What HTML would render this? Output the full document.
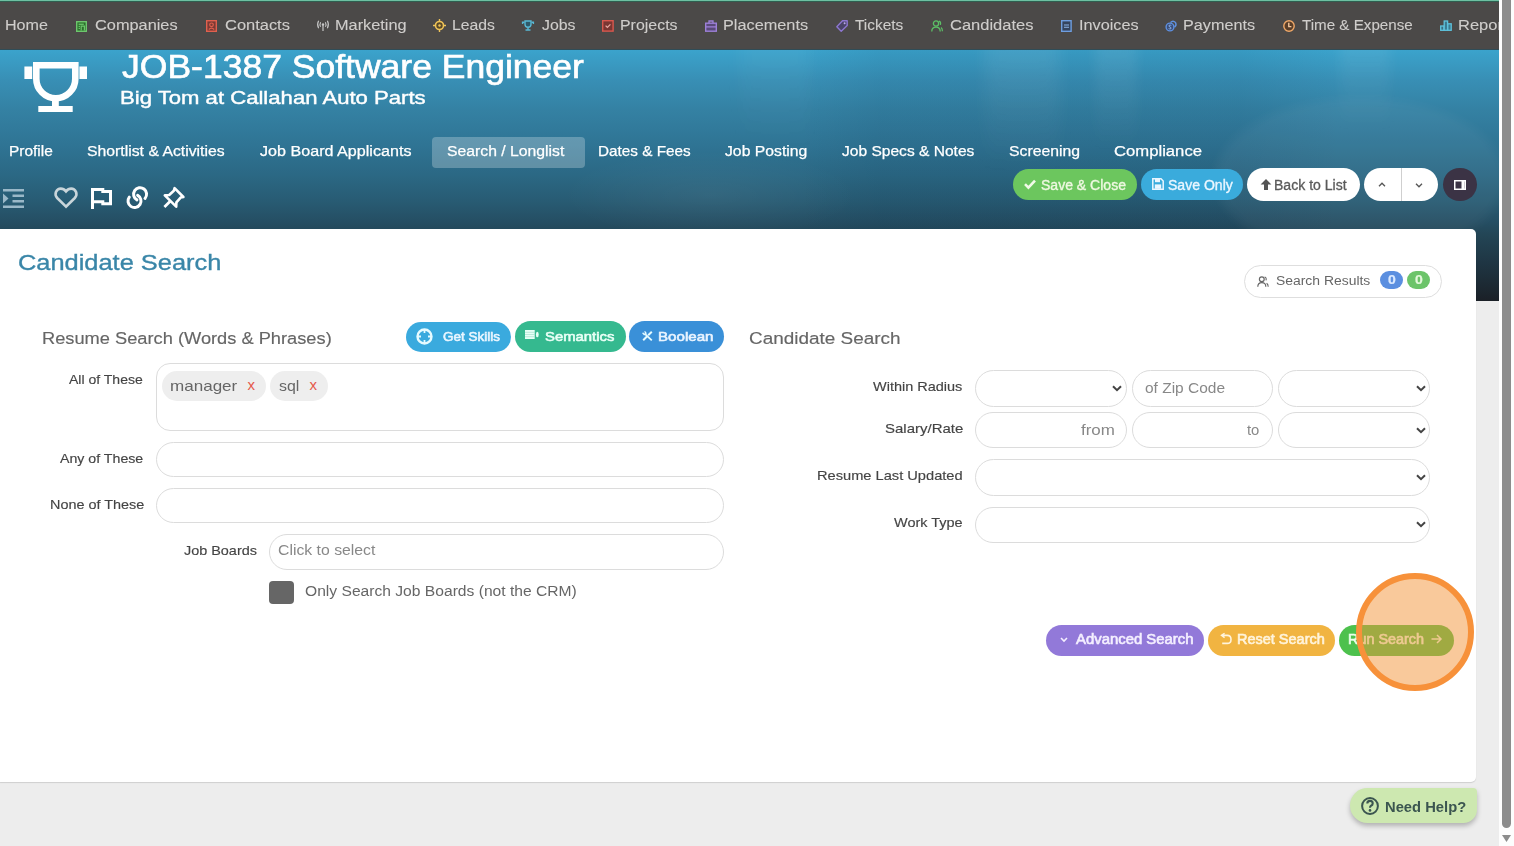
<!DOCTYPE html>
<html><head><meta charset="utf-8">
<style>
html,body{margin:0;padding:0;width:1514px;height:846px;overflow:hidden;background:#ededed;font-family:"Liberation Sans",sans-serif;}
.a{position:absolute;box-sizing:border-box;}
.t{position:absolute;white-space:nowrap;transform-origin:0 0;font-family:"Liberation Sans",sans-serif;}
svg{position:absolute;overflow:visible;}
#nav{left:0;top:0;width:1499px;height:50px;background:#4b4948;overflow:hidden;}
#navtop{left:0;top:0;width:1499px;height:2px;background:linear-gradient(#6dc0a2 0,#6dc0a2 50%,#2f5f50 50%);}
#hdr{left:0;top:50px;width:1499px;height:251px;background:linear-gradient(180deg,#3ba3cc 0px,#388fb5 30px,#3481a3 60px,#2f7494 95px,#2b6884 125px,#285c74 150px,#254e63 172px,#234555 185px,#1f3644 212px,#1c2831 238px,#1b2027 251px);}
#card{left:0;top:229px;width:1476px;height:553px;background:#fff;border-radius:0 5px 5px 0;box-shadow:0 1px 1px rgba(0,0,0,0.13);}
#track{left:1499px;top:0;width:15px;height:846px;background:#fdfdfd;}
#thumb{left:1502px;top:0;width:9px;height:828px;background:#8c8c8c;border-radius:0 0 4.5px 4.5px;}
.inp{position:absolute;box-sizing:border-box;border:1px solid #dcdcdc;background:#fff;}
.pill{border-radius:999px;}
.btn{position:absolute;border-radius:999px;}
</style></head><body>
<div id="nav" class="a"></div>
<div id="navtop" class="a"></div>
<div class="a" style="left:0;top:49px;width:1499px;height:1px;background:#2f4d58;"></div>
<div id="hdr" class="a"></div>
<div class="a" style="left:0;top:50px;width:1499px;height:251px;overflow:hidden;">
 <div class="a" style="left:800px;top:0;width:699px;height:180px;background:linear-gradient(90deg,rgba(0,30,60,0) 0,rgba(0,30,60,0.07) 80px,rgba(0,30,60,0.07) 440px,rgba(0,30,60,0) 540px);"></div>
 <div class="a" style="left:985px;top:-10px;width:75px;height:130px;background:linear-gradient(rgba(255,255,255,0.08),rgba(255,255,255,0));filter:blur(8px);"></div>
 <div class="a" style="left:1095px;top:-10px;width:42px;height:110px;background:linear-gradient(rgba(255,255,255,0.08),rgba(255,255,255,0));filter:blur(6px);"></div>
 <div class="a" style="left:740px;top:-10px;width:70px;height:110px;background:linear-gradient(rgba(255,255,255,0.04),rgba(255,255,255,0));filter:blur(8px);"></div>
 <div class="a" style="left:1340px;top:-10px;width:50px;height:90px;background:linear-gradient(rgba(255,255,255,0.07),rgba(255,255,255,0));filter:blur(6px);"></div>
 <div class="a" style="left:1215px;top:48px;width:290px;height:160px;border-radius:50%;background:rgba(255,255,255,0.045);filter:blur(5px);"></div>
 <div class="a" style="left:560px;top:100px;width:300px;height:90px;border-radius:50%;background:radial-gradient(ellipse at center,rgba(255,255,255,0.05),rgba(255,255,255,0) 70%);"></div>
</div>
<!-- active tab -->
<div class="a" style="left:432px;top:136.5px;width:153px;height:31px;border-radius:4px;background:rgba(255,255,255,0.25);"></div>
<div id="card" class="a"></div>

<!-- header buttons -->
<div class="btn" style="left:1013px;top:169px;width:124px;height:31px;background:#6cc65e;"></div>
<div class="btn" style="left:1141px;top:169px;width:102px;height:31px;background:#3aabdc;"></div>
<div class="btn" style="left:1247px;top:168px;width:113px;height:32.5px;background:#fff;"></div>
<div class="btn" style="left:1364px;top:168px;width:74px;height:32.5px;background:#fff;"></div>
<div class="a" style="left:1400.5px;top:168px;width:1.5px;height:32.5px;background:#cfcfcf;"></div>
<div class="btn" style="left:1443px;top:168px;width:34px;height:33px;background:#3b3345;"></div>

<!-- search results pill -->
<div class="inp pill" style="left:1244px;top:265px;width:198px;height:33px;border-color:#dedede"></div>
<div class="btn" style="left:1380px;top:271px;width:23px;height:18px;background:#5b8fe0;"></div>
<div class="btn" style="left:1407px;top:271px;width:23px;height:18px;background:#6cc46a;"></div>

<!-- resume search buttons -->
<div class="btn" style="left:406px;top:322px;width:105px;height:30px;background:#3aaade;"></div>
<div class="btn" style="left:515px;top:321px;width:111px;height:31px;background:#35b98f;"></div>
<div class="btn" style="left:629px;top:321px;width:95px;height:31px;background:#3a90d8;"></div>

<!-- left inputs -->
<div class="inp" style="left:156px;top:363px;width:568px;height:68px;border-radius:14px;"></div>
<div class="a" style="left:161.5px;top:371px;width:104px;height:30px;border-radius:15px;background:#eeeeee;"></div>
<div class="a" style="left:270px;top:371px;width:57.5px;height:30px;border-radius:15px;background:#eeeeee;"></div>
<div class="inp pill" style="left:156px;top:442px;width:568px;height:35px;"></div>
<div class="inp pill" style="left:156px;top:488px;width:568px;height:35px;"></div>
<div class="inp pill" style="left:269px;top:534px;width:455px;height:35.5px;"></div>
<div class="a" style="left:269px;top:581px;width:25px;height:23px;border-radius:4px;background:#666;"></div>

<!-- right inputs -->
<div class="inp pill" style="left:975px;top:370px;width:152px;height:37px;"></div>
<div class="inp pill" style="left:1132px;top:370px;width:141px;height:37px;"></div>
<div class="inp pill" style="left:1278px;top:370px;width:152px;height:37px;"></div>
<div class="inp pill" style="left:975px;top:412px;width:152px;height:36px;"></div>
<div class="inp pill" style="left:1132px;top:412px;width:141px;height:36px;"></div>
<div class="inp pill" style="left:1278px;top:412px;width:152px;height:36px;"></div>
<div class="inp pill" style="left:975px;top:459px;width:455px;height:37px;"></div>
<div class="inp pill" style="left:975px;top:507px;width:455px;height:36px;"></div>

<!-- bottom buttons -->
<div class="btn" style="left:1046px;top:625px;width:158px;height:31px;background:#9279d9;"></div>
<div class="btn" style="left:1208px;top:625px;width:127px;height:31px;background:#f1b441;"></div>
<div class="btn" style="left:1339px;top:625px;width:115px;height:31px;background:#4dc14d;"></div>

<!-- need help -->
<div class="a" style="left:1350px;top:788px;width:127px;height:35px;background:#cde8b0;border-radius:18px 4px 14px 18px;box-shadow:0 3px 5px rgba(0,0,0,0.25);"></div>

<div class="t" style="left:5.28px;top:17px;font-size:14.39px;line-height:17.27px;transform:scaleX(1.1191);color:#cfcdcb;font-weight:normal;-webkit-text-stroke:0.1px #cfcdcb;">Home</div>
<div class="t" style="left:95.00px;top:17px;font-size:14.39px;line-height:17.27px;transform:scaleX(1.1362);color:#cfcdcb;font-weight:normal;-webkit-text-stroke:0.1px #cfcdcb;">Companies</div>
<div class="t" style="left:224.50px;top:17px;font-size:14.39px;line-height:17.27px;transform:scaleX(1.1443);color:#cfcdcb;font-weight:normal;-webkit-text-stroke:0.1px #cfcdcb;">Contacts</div>
<div class="t" style="left:334.87px;top:17px;font-size:14.39px;line-height:17.27px;transform:scaleX(1.1349);color:#cfcdcb;font-weight:normal;-webkit-text-stroke:0.1px #cfcdcb;">Marketing</div>
<div class="t" style="left:452.20px;top:17px;font-size:14.39px;line-height:17.27px;transform:scaleX(1.0953);color:#cfcdcb;font-weight:normal;-webkit-text-stroke:0.1px #cfcdcb;">Leads</div>
<div class="t" style="left:541.70px;top:17px;font-size:14.39px;line-height:17.27px;transform:scaleX(1.1035);color:#cfcdcb;font-weight:normal;-webkit-text-stroke:0.1px #cfcdcb;">Jobs</div>
<div class="t" style="left:620.09px;top:17px;font-size:14.39px;line-height:17.27px;transform:scaleX(1.1076);color:#cfcdcb;font-weight:normal;-webkit-text-stroke:0.1px #cfcdcb;">Projects</div>
<div class="t" style="left:723.37px;top:17px;font-size:14.39px;line-height:17.27px;transform:scaleX(1.1324);color:#cfcdcb;font-weight:normal;-webkit-text-stroke:0.1px #cfcdcb;">Placements</div>
<div class="t" style="left:855.20px;top:17px;font-size:14.39px;line-height:17.27px;transform:scaleX(1.0736);color:#cfcdcb;font-weight:normal;-webkit-text-stroke:0.1px #cfcdcb;">Tickets</div>
<div class="t" style="left:949.90px;top:17px;font-size:14.39px;line-height:17.27px;transform:scaleX(1.1470);color:#cfcdcb;font-weight:normal;-webkit-text-stroke:0.1px #cfcdcb;">Candidates</div>
<div class="t" style="left:1078.57px;top:17px;font-size:14.39px;line-height:17.27px;transform:scaleX(1.1310);color:#cfcdcb;font-weight:normal;-webkit-text-stroke:0.1px #cfcdcb;">Invoices</div>
<div class="t" style="left:1183.27px;top:17px;font-size:14.39px;line-height:17.27px;transform:scaleX(1.1271);color:#cfcdcb;font-weight:normal;-webkit-text-stroke:0.1px #cfcdcb;">Payments</div>
<div class="t" style="left:1302.00px;top:17px;font-size:14.39px;line-height:17.27px;transform:scaleX(1.0550);color:#cfcdcb;font-weight:normal;-webkit-text-stroke:0.1px #cfcdcb;">Time &amp; Expense</div>
<div class="t" style="left:1458.45px;top:17px;font-size:14.39px;line-height:17.27px;transform:scaleX(1.1476);color:#cfcdcb;font-weight:normal;-webkit-text-stroke:0.1px #cfcdcb;">Reports</div>
<div class="t" style="left:121.50px;top:48px;font-size:32.56px;line-height:39.07px;transform:scaleX(1.0911);color:#ffffff;font-weight:normal;-webkit-text-stroke:0.65px #ffffff;">JOB-1387 Software Engineer</div>
<div class="t" style="left:119.77px;top:88px;font-size:18.02px;line-height:21.62px;transform:scaleX(1.2273);color:#ffffff;font-weight:normal;-webkit-text-stroke:0.4px #ffffff;">Big Tom at Callahan Auto Parts</div>
<div class="t" style="left:8.86px;top:143px;font-size:14.83px;line-height:17.8px;transform:scaleX(1.0421);color:#ffffff;font-weight:normal;-webkit-text-stroke:0.25px #ffffff;">Profile</div>
<div class="t" style="left:87.20px;top:143px;font-size:14.83px;line-height:17.8px;transform:scaleX(1.0641);color:#ffffff;font-weight:normal;-webkit-text-stroke:0.25px #ffffff;">Shortlist &amp; Activities</div>
<div class="t" style="left:260.40px;top:143px;font-size:14.83px;line-height:17.8px;transform:scaleX(1.0872);color:#ffffff;font-weight:normal;-webkit-text-stroke:0.25px #ffffff;">Job Board Applicants</div>
<div class="t" style="left:446.50px;top:143px;font-size:14.83px;line-height:17.8px;transform:scaleX(1.0626);color:#ffffff;font-weight:normal;-webkit-text-stroke:0.25px #ffffff;">Search / Longlist</div>
<div class="t" style="left:598.47px;top:143px;font-size:14.83px;line-height:17.8px;transform:scaleX(1.0315);color:#ffffff;font-weight:normal;-webkit-text-stroke:0.25px #ffffff;">Dates &amp; Fees</div>
<div class="t" style="left:725.40px;top:143px;font-size:14.83px;line-height:17.8px;transform:scaleX(1.0616);color:#ffffff;font-weight:normal;-webkit-text-stroke:0.25px #ffffff;">Job Posting</div>
<div class="t" style="left:841.80px;top:143px;font-size:14.83px;line-height:17.8px;transform:scaleX(1.0494);color:#ffffff;font-weight:normal;-webkit-text-stroke:0.25px #ffffff;">Job Specs &amp; Notes</div>
<div class="t" style="left:1008.50px;top:143px;font-size:14.83px;line-height:17.8px;transform:scaleX(1.0643);color:#ffffff;font-weight:normal;-webkit-text-stroke:0.25px #ffffff;">Screening</div>
<div class="t" style="left:1113.80px;top:143px;font-size:14.83px;line-height:17.8px;transform:scaleX(1.1236);color:#ffffff;font-weight:normal;-webkit-text-stroke:0.25px #ffffff;">Compliance</div>
<div class="t" style="left:1041.00px;top:177px;font-size:13.81px;line-height:16.57px;transform:scaleX(1.0165);color:#eef8e0;font-weight:normal;-webkit-text-stroke:0.35px #eef8e0;">Save &amp; Close</div>
<div class="t" style="left:1167.60px;top:177px;font-size:13.81px;line-height:16.57px;transform:scaleX(1.0180);color:#eaf6ff;font-weight:normal;-webkit-text-stroke:0.35px #eaf6ff;">Save Only</div>
<div class="t" style="left:1274.48px;top:177px;font-size:13.81px;line-height:16.57px;transform:scaleX(1.0187);color:#5a5a5a;font-weight:normal;-webkit-text-stroke:0.3px #5a5a5a;">Back to List</div>
<div class="t" style="left:17.56px;top:250px;font-size:22.24px;line-height:26.69px;transform:scaleX(1.1422);color:#3a86a8;font-weight:normal;-webkit-text-stroke:0.35px #3a86a8;">Candidate Search</div>
<div class="t" style="left:1275.50px;top:273px;font-size:13.23px;line-height:15.88px;transform:scaleX(1.0519);color:#666666;font-weight:normal;">Search Results</div>
<div class="t" style="left:41.98px;top:329px;font-size:16.3px;line-height:19.56px;transform:scaleX(1.1208);color:#666666;font-weight:normal;-webkit-text-stroke:0.15px #666666;">Resume Search (Words &amp; Phrases)</div>
<div class="t" style="left:442.50px;top:329px;font-size:13.4px;line-height:16.08px;transform:scaleX(1.0078);color:#eaf6ff;font-weight:normal;-webkit-text-stroke:0.6px #eaf6ff;">Get Skills</div>
<div class="t" style="left:545.00px;top:329px;font-size:13.4px;line-height:16.08px;transform:scaleX(1.1095);color:#eafff6;font-weight:normal;-webkit-text-stroke:0.6px #eafff6;">Semantics</div>
<div class="t" style="left:657.87px;top:329px;font-size:13.4px;line-height:16.08px;transform:scaleX(1.1280);color:#eaf4ff;font-weight:normal;-webkit-text-stroke:0.6px #eaf4ff;">Boolean</div>
<div class="t" style="left:69.40px;top:372px;font-size:13.1px;line-height:15.72px;transform:scaleX(1.0703);color:#444444;font-weight:normal;-webkit-text-stroke:0.15px #444444;">All of These</div>
<div class="t" style="left:169.70px;top:377px;font-size:15.53px;line-height:18.64px;transform:scaleX(1.0987);color:#666666;font-weight:normal;">manager</div>
<div class="t" style="left:278.80px;top:377px;font-size:15.53px;line-height:18.64px;transform:scaleX(1.0265);color:#666666;font-weight:normal;">sql</div>
<div class="t" style="left:60.30px;top:451px;font-size:13.1px;line-height:15.72px;transform:scaleX(1.0824);color:#444444;font-weight:normal;-webkit-text-stroke:0.15px #444444;">Any of These</div>
<div class="t" style="left:49.50px;top:497px;font-size:13.1px;line-height:15.72px;transform:scaleX(1.0992);color:#444444;font-weight:normal;-webkit-text-stroke:0.15px #444444;">None of These</div>
<div class="t" style="left:183.60px;top:543px;font-size:13.1px;line-height:15.72px;transform:scaleX(1.1006);color:#444444;font-weight:normal;-webkit-text-stroke:0.15px #444444;">Job Boards</div>
<div class="t" style="left:277.50px;top:542px;font-size:14.0px;line-height:16.8px;transform:scaleX(1.1276);color:#888888;font-weight:normal;">Click to select</div>
<div class="t" style="left:304.90px;top:582px;font-size:15.26px;line-height:18.31px;transform:scaleX(1.0245);color:#666666;font-weight:normal;">Only Search Job Boards (not the CRM)</div>
<div class="t" style="left:748.60px;top:329px;font-size:16.3px;line-height:19.56px;transform:scaleX(1.1626);color:#666666;font-weight:normal;-webkit-text-stroke:0.15px #666666;">Candidate Search</div>
<div class="t" style="left:873.10px;top:379px;font-size:13.1px;line-height:15.72px;transform:scaleX(1.1055);color:#444444;font-weight:normal;-webkit-text-stroke:0.15px #444444;">Within Radius</div>
<div class="t" style="left:884.80px;top:421px;font-size:13.1px;line-height:15.72px;transform:scaleX(1.1449);color:#444444;font-weight:normal;-webkit-text-stroke:0.15px #444444;">Salary/Rate</div>
<div class="t" style="left:817.48px;top:468px;font-size:13.1px;line-height:15.72px;transform:scaleX(1.1178);color:#444444;font-weight:normal;-webkit-text-stroke:0.15px #444444;">Resume Last Updated</div>
<div class="t" style="left:894.30px;top:515px;font-size:13.1px;line-height:15.72px;transform:scaleX(1.1039);color:#444444;font-weight:normal;-webkit-text-stroke:0.15px #444444;">Work Type</div>
<div class="t" style="left:1144.50px;top:380px;font-size:14.0px;line-height:16.8px;transform:scaleX(1.1063);color:#888888;font-weight:normal;">of Zip Code</div>
<div class="t" style="left:1081.10px;top:422px;font-size:14.0px;line-height:16.8px;transform:scaleX(1.2108);color:#888888;font-weight:normal;">from</div>
<div class="t" style="left:1247.00px;top:422px;font-size:14.0px;line-height:16.8px;transform:scaleX(1.0597);color:#888888;font-weight:normal;">to</div>
<div class="t" style="left:1076.40px;top:632px;font-size:13.8px;line-height:16.56px;transform:scaleX(1.0791);color:#f4efff;font-weight:normal;-webkit-text-stroke:0.6px #f4efff;">Advanced Search</div>
<div class="t" style="left:1236.55px;top:632px;font-size:13.8px;line-height:16.56px;transform:scaleX(1.0498);color:#fff4dc;font-weight:normal;-webkit-text-stroke:0.6px #fff4dc;">Reset Search</div>
<div class="t" style="left:1348.46px;top:632px;font-size:13.8px;line-height:16.56px;transform:scaleX(1.0438);color:#eaffea;font-weight:normal;-webkit-text-stroke:0.6px #eaffea;">Run Search</div>
<div class="t" style="left:1384.54px;top:798px;font-size:15.41px;line-height:18.49px;transform:scaleX(0.9575);color:#3b5550;font-weight:bold;">Need Help?</div>
<!-- nav icons -->
<svg style="left:76px;top:20.5px" width="11" height="11" viewBox="0 0 11 11"><rect x="0.7" y="0.7" width="9.6" height="9.6" fill="#2b6e2b" stroke="#6dc66d" stroke-width="1.4"/><rect x="2.6" y="2.6" width="5.2" height="1.3" fill="#6dc66d"/><rect x="2.6" y="4.8" width="1.3" height="1.2" fill="#6dc66d"/><rect x="2.6" y="6.8" width="1.3" height="1.2" fill="#6dc66d"/><path d="M5.2 9.5V5.2H8.4V9.5" fill="none" stroke="#6dc66d" stroke-width="1.2"/></svg>
<svg style="left:205.5px;top:19.5px" width="11" height="12" viewBox="0 0 11 12"><rect x="0.7" y="0.7" width="9.6" height="10.6" fill="#7a3a34" stroke="#e0604e" stroke-width="1.4"/><circle cx="5.5" cy="4.8" r="1.8" fill="none" stroke="#e0604e" stroke-width="1.2"/><path d="M2.8 9.5Q5.5 6.8 8.2 9.5" fill="none" stroke="#e0604e" stroke-width="1.2"/></svg>
<svg style="left:317px;top:20px" width="12" height="11" viewBox="0 0 12 11"><circle cx="6" cy="4.5" r="1.2" fill="#c8c8c8"/><path d="M6 5V11" stroke="#c8c8c8" stroke-width="1.2"/><path d="M3.6 2.2Q2.4 4.5 3.6 6.8M8.4 2.2Q9.6 4.5 8.4 6.8M1.6 0.8Q-0.4 4.5 1.6 8.2M10.4 0.8Q12.4 4.5 10.4 8.2" fill="none" stroke="#c8c8c8" stroke-width="1.1"/></svg>
<svg style="left:433px;top:19px" width="13" height="13" viewBox="0 0 13 13"><circle cx="6.5" cy="6.5" r="4" fill="#5a4a2a" stroke="#f0c458" stroke-width="1.6"/><circle cx="6.5" cy="6.5" r="1.2" fill="#f0c458"/><path d="M6.5 0V2.5M6.5 10.5V13M0 6.5H2.5M10.5 6.5H13" stroke="#f0c458" stroke-width="1.4"/></svg>
<svg style="left:521px;top:20px" width="14" height="11" viewBox="0 0 14 11"><path d="M4 1H10V4.2Q10 7.2 7 7.2Q4 7.2 4 4.2Z" fill="#2e5a6a" stroke="#58b8d4" stroke-width="1.4"/><path d="M1 2.2H3.5M10.5 2.2H13M1.6 1.5V4M12.4 1.5V4M7 7.2V9.5M4.5 10H9.5" stroke="#58b8d4" stroke-width="1.4"/></svg>
<svg style="left:602px;top:19.5px" width="12" height="12" viewBox="0 0 12 12"><rect x="0.7" y="0.7" width="10.4" height="10.4" fill="#7a3632" stroke="#d9584e" stroke-width="1.4"/><path d="M3.6 5.6L5.4 7.4L8.4 4.4" fill="none" stroke="#e8a8a0" stroke-width="1.3"/></svg>
<svg style="left:704.5px;top:19.5px" width="12" height="12" viewBox="0 0 12 12"><rect x="0.7" y="3.2" width="10.6" height="8" fill="#5a4a7a" stroke="#9d80d8" stroke-width="1.4"/><path d="M4 3.2V1H8V3.2M1 6.8H11" fill="none" stroke="#9d80d8" stroke-width="1.3"/></svg>
<svg style="left:835.5px;top:19.5px" width="12" height="12" viewBox="0 0 12 12"><path d="M6.5 0.8H11.2V5.5L5.2 11.3L0.8 6.8Z" fill="#4a4468" stroke="#8d76d0" stroke-width="1.4" stroke-linejoin="round"/><circle cx="8.6" cy="3.3" r="1" fill="#b8a8e8"/></svg>
<svg style="left:930.5px;top:19.5px" width="12" height="12" viewBox="0 0 12 12"><circle cx="5" cy="3.5" r="2.6" fill="none" stroke="#5cbf66" stroke-width="1.3"/><path d="M0.8 11.5Q0.8 7.2 5 7.2Q9.2 7.2 9.2 11.5" fill="none" stroke="#5cbf66" stroke-width="1.3"/><path d="M8 1.2Q10.2 1.8 9.4 4.8M10 7.5Q11.6 8.6 11.4 11.2" fill="none" stroke="#5cbf66" stroke-width="1.2"/></svg>
<svg style="left:1061px;top:19.5px" width="11" height="12" viewBox="0 0 11 12"><rect x="0.7" y="0.7" width="9.4" height="10.6" fill="#34445e" stroke="#6e9ee0" stroke-width="1.4"/><path d="M3 5H8M3 7.2H8" stroke="#8eb6ea" stroke-width="1.1"/></svg>
<svg style="left:1165px;top:19.5px" width="12" height="12" viewBox="0 0 12 12"><ellipse cx="5" cy="7" rx="3.9" ry="3.9" fill="#3a4e78" stroke="#5f90e0" stroke-width="1.4"/><path d="M5.5 2.5Q8 0 10.5 2.5Q12 5 9.5 7.2" fill="none" stroke="#5f90e0" stroke-width="1.4"/><path d="M6.3 5.4Q5 4.6 4 5.4Q3.4 6.4 5 7Q6.6 7.6 6 8.6Q5 9.4 3.6 8.6" fill="none" stroke="#8fb4ee" stroke-width="0.9"/></svg>
<svg style="left:1282.5px;top:20px" width="12" height="12" viewBox="0 0 12 12"><circle cx="6" cy="6" r="5.2" fill="#5a3e28" stroke="#f0a868" stroke-width="1.4"/><path d="M5.8 2.8V6.6H8.4" fill="none" stroke="#f4c8a0" stroke-width="1.4"/></svg>
<svg style="left:1440px;top:20px" width="12" height="11" viewBox="0 0 12 11"><rect x="0.7" y="6" width="3.2" height="4.3" fill="#3a6e80" stroke="#5ec2dc" stroke-width="1.3"/><rect x="4.2" y="1" width="3.4" height="9.3" fill="#3a7a90" stroke="#5ec2dc" stroke-width="1.3"/><rect x="7.8" y="3.8" width="3.4" height="6.5" fill="#3a7a90" stroke="#5ec2dc" stroke-width="1.3"/></svg>

<!-- big trophy -->
<svg style="left:24px;top:62px" width="63" height="50" viewBox="0 0 63 50"><path d="M12.3 3.3H51.3V16.7A19.5 19.5 0 0 1 12.3 16.7Z" fill="none" stroke="#fff" stroke-width="6.6"/><rect x="0.4" y="4.5" width="7.8" height="12.5" fill="#fff"/><rect x="55.4" y="4.5" width="7.6" height="12.5" fill="#fff"/><rect x="28" y="38" width="6.8" height="8" fill="#fff"/><rect x="14.3" y="44" width="34.4" height="6" fill="#fff"/></svg>

<!-- header tool icons -->
<svg style="left:3px;top:189px" width="21" height="19" viewBox="0 0 21 19"><path d="M0 1.2H21M9.5 6.7H21M9.5 12.2H21M0 17.7H21" stroke="#9ab8c8" stroke-width="2.5"/><path d="M0 4.5L5.5 9.5L0 14.5Z" fill="#9ab8c8"/></svg>
<svg style="left:54px;top:187px" width="24" height="22" viewBox="0 0 24 22"><path d="M12 19.6L3.2 11Q0.6 8.2 2 4.8Q3.6 1.6 6.8 1.6Q9.8 1.6 12 4.4Q14.2 1.6 17.2 1.6Q20.4 1.6 22 4.8Q23.4 8.2 20.8 11Z" fill="none" stroke="#c9d5da" stroke-width="2.6" stroke-linejoin="miter"/></svg>
<svg style="left:91px;top:188px" width="22" height="21" viewBox="0 0 22 21"><path d="M1.5 21V1.5H11.8V3.5H19.5V15.7H11.8V13.8H1.5" fill="none" stroke="#fff" stroke-width="3"/></svg>
<svg style="left:126px;top:187px" width="23" height="23" viewBox="0 0 23 23"><path d="M10.95 12.88A6.5 6.5 0 1 1 19.0 11.46" fill="none" stroke="#fff" stroke-width="3" stroke-linecap="round"/><path d="M3.29 10.11A6.5 6.5 0 1 0 11.66 8.32" fill="none" stroke="#fff" stroke-width="3" stroke-linecap="round"/></svg>
<svg style="left:163px;top:187px" width="22" height="21" viewBox="0 0 22 21"><path d="M11.6 1.2L20.4 10L17.6 10.6L13.4 15.4L13.2 19.6L1.8 8.4L6.2 8L10.8 3.8Z" fill="none" stroke="#fff" stroke-width="2.6" stroke-linejoin="round"/><path d="M7.4 14L1.4 20" stroke="#fff" stroke-width="2.8"/></svg>

<!-- header buttons icons -->
<svg style="left:1024px;top:179px" width="12" height="10" viewBox="0 0 12 10"><path d="M1 5.2L4.4 8.6L11 1.6" fill="none" stroke="#f2fae8" stroke-width="2.6"/></svg>
<svg style="left:1152px;top:178px" width="12" height="12" viewBox="0 0 12 12"><path d="M0.8 0.8H9L11.2 3V11.2H0.8Z" fill="none" stroke="#eaf6ff" stroke-width="1.5"/><rect x="3" y="0.8" width="5" height="3.4" fill="#eaf6ff"/><rect x="2.8" y="6.4" width="6.4" height="4.4" fill="#eaf6ff"/></svg>
<svg style="left:1260px;top:178px" width="12" height="12" viewBox="0 0 12 12"><path d="M6 1L11.4 6.4H8V12H4V6.4H0.6Z" fill="#555"/></svg>
<svg style="left:1378px;top:182px" width="8" height="5" viewBox="0 0 8 5"><path d="M1 4.2L4 1.2L7 4.2" fill="none" stroke="#555" stroke-width="1.3"/></svg>
<svg style="left:1415px;top:183px" width="8" height="5" viewBox="0 0 8 5"><path d="M1 0.8L4 3.8L7 0.8" fill="none" stroke="#555" stroke-width="1.3"/></svg>
<svg style="left:1454px;top:180px" width="12" height="10" viewBox="0 0 12 10"><rect x="0.75" y="0.75" width="10.5" height="8.5" fill="none" stroke="#fff" stroke-width="1.5"/><rect x="7.5" y="0.75" width="3" height="8.5" fill="#fff"/></svg>

<!-- search results icon -->
<svg style="left:1257px;top:276px" width="12" height="11" viewBox="0 0 12 11"><circle cx="4.8" cy="3.2" r="2.4" fill="none" stroke="#666" stroke-width="1.2"/><path d="M0.8 10.8Q0.8 6.6 4.8 6.6Q8.8 6.6 8.8 10.8" fill="none" stroke="#666" stroke-width="1.2"/><path d="M7.6 1Q9.8 1.6 9 4.4M9.6 7.2Q11.2 8.2 11.2 10.8" fill="none" stroke="#666" stroke-width="1.1"/></svg>
<!-- badge digits -->
<div class="t" style="left:1388px;top:272px;font-size:12.5px;line-height:16px;color:#dceaff;font-weight:bold;transform:scaleX(1.12);-webkit-text-stroke:0.2px #dceaff;">0</div>
<div class="t" style="left:1415px;top:272px;font-size:12.5px;line-height:16px;color:#e4f8dc;font-weight:bold;transform:scaleX(1.12);-webkit-text-stroke:0.2px #e4f8dc;">0</div>

<!-- resume buttons icons -->
<svg style="left:416px;top:328px" width="17" height="17" viewBox="0 0 17 17"><circle cx="8.5" cy="8.5" r="7" fill="none" stroke="#e6fbff" stroke-width="2.4"/><path d="M8.5 1.5V5M8.5 12V15.5M1.5 8.5H5M12 8.5H15.5" stroke="#e6fbff" stroke-width="1.8"/></svg>
<svg style="left:525.4px;top:330px" width="14" height="9" viewBox="0 0 14 9"><rect x="0" y="0" width="9.7" height="9" fill="#e6fff7"/><path d="M0 2.3H9.7M0 4.5H9.7M0 6.7H9.7" stroke="#9adcc6" stroke-width="0.6"/><ellipse cx="12.3" cy="4.5" rx="1.4" ry="2.8" fill="#e6fff7"/></svg>
<svg style="left:641.5px;top:331px" width="11" height="10" viewBox="0 0 11 10"><path d="M1.2 9.2L5.4 5M6.2 4.2L9.8 0.8" stroke="#e6fbff" stroke-width="2"/><path d="M3.2 3.2L9.8 9.4" stroke="#e6fbff" stroke-width="1.8"/><path d="M0.6 1.8L2.2 3.6L4 2.2L2.6 0.4" fill="none" stroke="#e6fbff" stroke-width="1.3"/></svg>

<!-- tag x -->
<div class="t" style="left:247.5px;top:377px;font-size:15px;line-height:16px;color:#e5594b;">x</div>
<div class="t" style="left:309.5px;top:377px;font-size:15px;line-height:16px;color:#e5594b;">x</div>

<!-- select chevrons -->
<svg style="left:1112px;top:385px" width="10" height="7" viewBox="0 0 10 7"><path d="M1 1.2L5 5.2L9 1.2" fill="none" stroke="#444" stroke-width="2"/></svg>
<svg style="left:1415.5px;top:385px" width="10" height="7" viewBox="0 0 10 7"><path d="M1 1.2L5 5.2L9 1.2" fill="none" stroke="#444" stroke-width="2"/></svg>
<svg style="left:1415.5px;top:427px" width="10" height="7" viewBox="0 0 10 7"><path d="M1 1.2L5 5.2L9 1.2" fill="none" stroke="#444" stroke-width="2"/></svg>
<svg style="left:1415.5px;top:474px" width="10" height="7" viewBox="0 0 10 7"><path d="M1 1.2L5 5.2L9 1.2" fill="none" stroke="#444" stroke-width="2"/></svg>
<svg style="left:1415.5px;top:521px" width="10" height="7" viewBox="0 0 10 7"><path d="M1 1.2L5 5.2L9 1.2" fill="none" stroke="#444" stroke-width="2"/></svg>

<!-- bottom button icons -->
<svg style="left:1059.5px;top:637px" width="8" height="6" viewBox="0 0 8 6"><path d="M1 1L4 4L7 1" fill="none" stroke="#f4efff" stroke-width="1.6"/></svg>
<svg style="left:1220px;top:633px" width="12" height="12" viewBox="0 0 12 12"><path d="M3 2.4H7.2Q11 2.4 11 6.4Q11 10.4 7.2 10.4H2.2" fill="none" stroke="#fff4dc" stroke-width="1.6"/><path d="M4.6 0.4L1.6 2.4L4.6 4.6" fill="none" stroke="#fff4dc" stroke-width="1.6"/></svg>
<svg style="left:1431px;top:634px" width="11" height="10" viewBox="0 0 11 10"><path d="M0.5 5H10M6 1L10 5L6 9" fill="none" stroke="#eaffea" stroke-width="1.5"/></svg>

<!-- help icon -->
<svg style="left:1361px;top:797px" width="18" height="18" viewBox="0 0 18 18"><circle cx="9" cy="9" r="7.9" fill="none" stroke="#3b5550" stroke-width="2"/><path d="M6.3 6.6Q6.3 3.9 9 3.9Q11.7 3.9 11.7 6.4Q11.7 8 10 8.8Q9 9.3 9 10.8" fill="none" stroke="#3b5550" stroke-width="2.1"/><circle cx="9" cy="13.4" r="1.3" fill="#3b5550"/></svg>


<!-- click marker -->
<div class="a" style="left:1356px;top:573px;width:118px;height:118px;border-radius:50%;border:6px solid #f7913a;background:rgba(243,147,55,0.5);"></div>
<div id="track" class="a"></div>
<div id="thumb" class="a"></div>
<svg style="left:1502px;top:835px" width="9" height="7"><path d="M0 0H9L4.5 7Z" fill="#8c8c8c"/></svg>
</body></html>
